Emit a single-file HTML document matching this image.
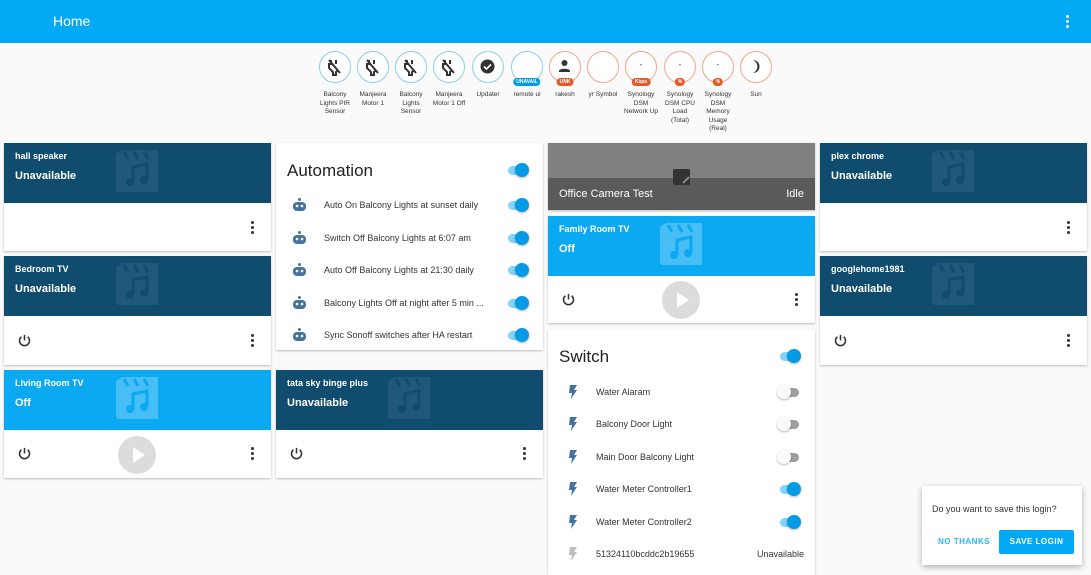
<!DOCTYPE html>
<html><head><meta charset="utf-8"><style>
*{box-sizing:border-box;margin:0;padding:0}
body{width:1091px;height:570px;overflow:hidden;background:#fafafa;font-family:"Liberation Sans",sans-serif;position:relative;color:#212121}
.top{position:absolute;left:0;top:0;width:1091px;height:43px;background:#03a9f4;color:#fff}
.top .t{position:absolute;left:53px;top:13px;font-size:14px}
.card{position:absolute;background:#fff;box-shadow:0 1px 2px rgba(0,0,0,.25);overflow:hidden}
.hd{position:absolute;left:0;top:0;width:100%;height:60px;background:#0f4c6e;color:#fff}
.hd.on{background:#0aa9f2}
.hd .n{position:absolute;left:11px;top:8px;font-size:9px;font-weight:bold}
.hd .s{position:absolute;left:11px;top:27px;font-size:11px;font-weight:bold}
.hd svg{position:absolute;left:112px;top:7px}
.dots{position:absolute;right:17px;width:3px}
.dots i{display:block;width:3px;height:3px;border-radius:50%;background:#333;margin-bottom:2px}
.pw{position:absolute;left:13px}
.play{position:absolute;left:114px;width:38px;height:38px;border-radius:50%;background:#dcdcdc}
.play:after{content:"";position:absolute;left:15px;top:11px;border-left:12px solid #fff;border-top:8px solid transparent;border-bottom:8px solid transparent}
.badge{position:absolute;top:51px;width:32px;height:32px;border-radius:50%;border:1.5px solid #87cdf3;background:#fff}
.badge.r{border-color:#f0a58d}
.bl{position:absolute;top:91px;width:34px;text-align:center;font-size:6.5px;line-height:8.5px;color:#333}
.tag{position:absolute;left:50%;transform:translateX(-50%);top:26px;background:#e55a2b;color:#fff;font-size:5px;border-radius:5px;padding:1px 3px;font-weight:bold;white-space:nowrap}
.tag.b{background:#039be5}
.dash{position:absolute;left:0;width:100%;text-align:center;top:8px;font-size:8px;color:#333}
.row{position:absolute;left:0;width:100%;height:32px;font-size:9px;color:#333}
.row .lb{position:absolute;left:48px;top:11px}
.tg{position:absolute;right:14px;width:24px;height:12px}
.tg .tr{position:absolute;left:3px;top:2px;width:19px;height:9px;border-radius:5px;background:#81d4fa}
.tg .th{position:absolute;right:0;top:-1px;width:14px;height:14px;border-radius:50%;background:#039be5;box-shadow:0 1px 2px rgba(0,0,0,.3)}
.tg.off .tr{background:#9e9e9e}
.tg.off .th{left:0;right:auto;background:#fafafa}
.h2{position:absolute;left:11px;font-size:17px;color:#212121}
</style></head><body>
<div class="top"><div class="t">Home</div>
<div style="position:absolute;left:1066px;top:15px"><div style="width:3px;height:3px;background:#fff;border-radius:50%;margin-bottom:2px"></div><div style="width:3px;height:3px;background:#fff;border-radius:50%;margin-bottom:2px"></div><div style="width:3px;height:3px;background:#fff;border-radius:50%"></div></div></div>

<div class="badge" style="left:319px"><svg width="29" height="29" viewBox="0 0 29 29"><path d="M11 8v4h-2v4l4 4v3h3v-3l1-1M16 8v4M9 8l11 13" stroke="#333" stroke-width="2" fill="none"/></svg></div>
<div class="badge" style="left:357px"><svg width="29" height="29" viewBox="0 0 29 29"><path d="M11 8v4h-2v4l4 4v3h3v-3l1-1M16 8v4M9 8l11 13" stroke="#333" stroke-width="2" fill="none"/></svg></div>
<div class="badge" style="left:395px"><svg width="29" height="29" viewBox="0 0 29 29"><path d="M11 8v4h-2v4l4 4v3h3v-3l1-1M16 8v4M9 8l11 13" stroke="#333" stroke-width="2" fill="none"/></svg></div>
<div class="badge" style="left:433px"><svg width="29" height="29" viewBox="0 0 29 29"><path d="M11 8v4h-2v4l4 4v3h3v-3l1-1M16 8v4M9 8l11 13" stroke="#333" stroke-width="2" fill="none"/></svg></div>
<div class="badge" style="left:472px"><svg width="29" height="29" viewBox="0 0 29 29"><circle cx="14.5" cy="14.5" r="7" fill="#333"/><path d="M11 14.5l2.5 2.5 4.5-4.5" stroke="#fff" stroke-width="1.6" fill="none"/></svg></div>
<div class="badge" style="left:511px"><span class="tag b">UNAVAIL</span></div>
<div class="badge r" style="left:549px"><svg width="29" height="29" viewBox="0 0 29 29"><circle cx="14.5" cy="11" r="3" fill="#333"/><path d="M9 19c0-3 11-3 11 0v1H9z" fill="#333"/></svg><span class="tag">UNK</span></div>
<div class="badge r" style="left:587px"></div>
<div class="badge r" style="left:625px"><div class="dash">-</div><span class="tag">Kbps</span></div>
<div class="badge r" style="left:664px"><div class="dash">-</div><span class="tag">%</span></div>
<div class="badge r" style="left:702px"><div class="dash">-</div><span class="tag">%</span></div>
<div class="badge r" style="left:740px"><svg width="29" height="29" viewBox="0 0 29 29"><path d="M12 8a7 7 0 0 1 0 13a6 6 0 0 0 0-13z" fill="#333"/></svg></div>

<div class="bl" style="left:318px">Balcony Lights PIR Sensor</div>
<div class="bl" style="left:356px">Manjeera Motor 1</div>
<div class="bl" style="left:394px">Balcony Lights Sensor</div>
<div class="bl" style="left:432px">Manjeera Motor 1 Off</div>
<div class="bl" style="left:471px">Updater</div>
<div class="bl" style="left:505px;width:44px">remote ui</div>
<div class="bl" style="left:548px">rakesh</div>
<div class="bl" style="left:582px;width:42px">yr Symbol</div>
<div class="bl" style="left:624px">Synology DSM Network Up</div>
<div class="bl" style="left:663px">Synology DSM CPU Load (Total)</div>
<div class="bl" style="left:701px">Synology DSM Memory Usage (Real)</div>
<div class="bl" style="left:739px">Sun</div>

<!-- column 1 -->
<div class="card" style="left:4px;top:143px;width:267px;height:108px"><div class="hd"><div class="n">hall speaker</div><div class="s">Unavailable</div><svg width="42" height="42" viewBox="0 0 42 42"><path d="M0 4l6-4h36v42H3a3 3 0 0 1-3-3z" fill="rgba(255,255,255,.07)"/><path d="M8 2l4 7M18 2l4 7M28 2l4 7" stroke="#0f4c6e" stroke-width="3"/><path d="M17 32V17l14-3v16" stroke="#0f4c6e" stroke-width="3" fill="none"/><circle cx="14" cy="32" r="4" fill="#0f4c6e"/><circle cx="28" cy="30" r="4" fill="#0f4c6e"/></svg></div><div class="dots" style="top:78px"><i></i><i></i><i></i></div></div>
<div class="card" style="left:4px;top:256px;width:267px;height:109px"><div class="hd"><div class="n">Bedroom TV</div><div class="s">Unavailable</div><svg width="42" height="42" viewBox="0 0 42 42"><path d="M0 4l6-4h36v42H3a3 3 0 0 1-3-3z" fill="rgba(255,255,255,.07)"/><path d="M8 2l4 7M18 2l4 7M28 2l4 7" stroke="#0f4c6e" stroke-width="3"/><path d="M17 32V17l14-3v16" stroke="#0f4c6e" stroke-width="3" fill="none"/><circle cx="14" cy="32" r="4" fill="#0f4c6e"/><circle cx="28" cy="30" r="4" fill="#0f4c6e"/></svg></div>
<svg class="pw" style="top:77px" width="15" height="15" viewBox="0 0 24 24"><path d="M12 3v9M7 6a8 8 0 1 0 10 0" stroke="#333" stroke-width="2.4" fill="none"/></svg><div class="dots" style="top:78px"><i></i><i></i><i></i></div></div>
<div class="card" style="left:4px;top:370px;width:267px;height:108px"><div class="hd on"><div class="n">Living Room TV</div><div class="s">Off</div><svg width="42" height="42" viewBox="0 0 42 42"><path d="M0 4l6-4h36v42H3a3 3 0 0 1-3-3z" fill="rgba(255,255,255,.25)"/><path d="M8 2l4 7M18 2l4 7M28 2l4 7" stroke="#0aa9f2" stroke-width="3"/><path d="M17 32V17l14-3v16" stroke="#0aa9f2" stroke-width="3" fill="none"/><circle cx="14" cy="32" r="4" fill="#0aa9f2"/><circle cx="28" cy="30" r="4" fill="#0aa9f2"/></svg></div>
<svg class="pw" style="top:76px" width="15" height="15" viewBox="0 0 24 24"><path d="M12 3v9M7 6a8 8 0 1 0 10 0" stroke="#333" stroke-width="2.4" fill="none"/></svg><div class="play" style="top:66px"></div><div class="dots" style="top:77px"><i></i><i></i><i></i></div></div>

<!-- column 2 -->
<div class="card" style="left:276px;top:143px;width:267px;height:207px">
<div class="h2" style="top:18px">Automation</div>
<div class="tg" style="top:21px"><div class="tr"></div><div class="th"></div></div>
<div class="row" style="top:46px"><svg style="position:absolute;left:16px;top:9px" width="15" height="14" viewBox="0 0 15 14"><circle cx="7.5" cy="1.5" r="1.5" fill="#44739e"/><rect x="1" y="4" width="13" height="9" rx="4" fill="#44739e"/><circle cx="5" cy="8" r="1.3" fill="#fff"/><circle cx="10" cy="8" r="1.3" fill="#fff"/></svg><span class="lb">Auto On Balcony Lights at sunset daily</span><div class="tg" style="top:10px"><div class="tr"></div><div class="th"></div></div></div>
<div class="row" style="top:79px"><svg style="position:absolute;left:16px;top:9px" width="15" height="14" viewBox="0 0 15 14"><circle cx="7.5" cy="1.5" r="1.5" fill="#44739e"/><rect x="1" y="4" width="13" height="9" rx="4" fill="#44739e"/><circle cx="5" cy="8" r="1.3" fill="#fff"/><circle cx="10" cy="8" r="1.3" fill="#fff"/></svg><span class="lb">Switch Off Balcony Lights at 6:07 am</span><div class="tg" style="top:10px"><div class="tr"></div><div class="th"></div></div></div>
<div class="row" style="top:111px"><svg style="position:absolute;left:16px;top:9px" width="15" height="14" viewBox="0 0 15 14"><circle cx="7.5" cy="1.5" r="1.5" fill="#44739e"/><rect x="1" y="4" width="13" height="9" rx="4" fill="#44739e"/><circle cx="5" cy="8" r="1.3" fill="#fff"/><circle cx="10" cy="8" r="1.3" fill="#fff"/></svg><span class="lb">Auto Off Balcony Lights at 21:30 daily</span><div class="tg" style="top:10px"><div class="tr"></div><div class="th"></div></div></div>
<div class="row" style="top:144px"><svg style="position:absolute;left:16px;top:9px" width="15" height="14" viewBox="0 0 15 14"><circle cx="7.5" cy="1.5" r="1.5" fill="#44739e"/><rect x="1" y="4" width="13" height="9" rx="4" fill="#44739e"/><circle cx="5" cy="8" r="1.3" fill="#fff"/><circle cx="10" cy="8" r="1.3" fill="#fff"/></svg><span class="lb">Balcony Lights Off at night after 5 min ...</span><div class="tg" style="top:10px"><div class="tr"></div><div class="th"></div></div></div>
<div class="row" style="top:176px"><svg style="position:absolute;left:16px;top:9px" width="15" height="14" viewBox="0 0 15 14"><circle cx="7.5" cy="1.5" r="1.5" fill="#44739e"/><rect x="1" y="4" width="13" height="9" rx="4" fill="#44739e"/><circle cx="5" cy="8" r="1.3" fill="#fff"/><circle cx="10" cy="8" r="1.3" fill="#fff"/></svg><span class="lb">Sync Sonoff switches after HA restart</span><div class="tg" style="top:10px"><div class="tr"></div><div class="th"></div></div></div>
</div>
<div class="card" style="left:276px;top:370px;width:267px;height:108px"><div class="hd"><div class="n">tata sky binge plus</div><div class="s">Unavailable</div><svg width="42" height="42" viewBox="0 0 42 42"><path d="M0 4l6-4h36v42H3a3 3 0 0 1-3-3z" fill="rgba(255,255,255,.07)"/><path d="M8 2l4 7M18 2l4 7M28 2l4 7" stroke="#0f4c6e" stroke-width="3"/><path d="M17 32V17l14-3v16" stroke="#0f4c6e" stroke-width="3" fill="none"/><circle cx="14" cy="32" r="4" fill="#0f4c6e"/><circle cx="28" cy="30" r="4" fill="#0f4c6e"/></svg></div>
<svg class="pw" style="top:76px" width="15" height="15" viewBox="0 0 24 24"><path d="M12 3v9M7 6a8 8 0 1 0 10 0" stroke="#333" stroke-width="2.4" fill="none"/></svg><div class="dots" style="top:77px"><i></i><i></i><i></i></div></div>

<!-- column 3 -->
<div class="card" style="left:548px;top:143px;width:267px;height:67px;background:#808080">
<div style="position:absolute;left:0;top:35px;width:100%;height:32px;background:#5a5a5a"></div>
<svg style="position:absolute;left:124px;top:25px" width="19" height="19" viewBox="0 0 19 19"><rect x="1" y="1" width="17" height="16" rx="2" fill="#333"/><path d="M11 15l6-6" stroke="#888" stroke-width="2"/></svg>
<div style="position:absolute;left:11px;top:45px;color:#fff;font-size:11px">Office Camera Test</div>
<div style="position:absolute;right:11px;top:45px;color:#fff;font-size:11px">Idle</div></div>
<div class="card" style="left:548px;top:216px;width:267px;height:107px"><div class="hd on"><div class="n">Family Room TV</div><div class="s">Off</div><svg width="42" height="42" viewBox="0 0 42 42"><path d="M0 4l6-4h36v42H3a3 3 0 0 1-3-3z" fill="rgba(255,255,255,.25)"/><path d="M8 2l4 7M18 2l4 7M28 2l4 7" stroke="#0aa9f2" stroke-width="3"/><path d="M17 32V17l14-3v16" stroke="#0aa9f2" stroke-width="3" fill="none"/><circle cx="14" cy="32" r="4" fill="#0aa9f2"/><circle cx="28" cy="30" r="4" fill="#0aa9f2"/></svg></div>
<svg class="pw" style="top:76px" width="15" height="15" viewBox="0 0 24 24"><path d="M12 3v9M7 6a8 8 0 1 0 10 0" stroke="#333" stroke-width="2.4" fill="none"/></svg><div class="play" style="top:65px"></div><div class="dots" style="top:77px"><i></i><i></i><i></i></div></div>
<div class="card" style="left:548px;top:330px;width:267px;height:245px">
<div class="h2" style="top:17px">Switch</div>
<div class="tg" style="top:20px"><div class="tr"></div><div class="th"></div></div>
<div class="row" style="top:46px"><svg style="position:absolute;left:20px;top:9px" width="10" height="14" viewBox="0 0 10 14"><path d="M2 0h7L6 5h3L3 14l1-6H1z" fill="#44739e"/></svg><span class="lb">Water Alaram</span><div class="tg off" style="top:10px"><div class="tr"></div><div class="th"></div></div></div>
<div class="row" style="top:78px"><svg style="position:absolute;left:20px;top:9px" width="10" height="14" viewBox="0 0 10 14"><path d="M2 0h7L6 5h3L3 14l1-6H1z" fill="#44739e"/></svg><span class="lb">Balcony Door Light</span><div class="tg off" style="top:10px"><div class="tr"></div><div class="th"></div></div></div>
<div class="row" style="top:111px"><svg style="position:absolute;left:20px;top:9px" width="10" height="14" viewBox="0 0 10 14"><path d="M2 0h7L6 5h3L3 14l1-6H1z" fill="#44739e"/></svg><span class="lb">Main Door Balcony Light</span><div class="tg off" style="top:10px"><div class="tr"></div><div class="th"></div></div></div>
<div class="row" style="top:143px"><svg style="position:absolute;left:20px;top:9px" width="10" height="14" viewBox="0 0 10 14"><path d="M2 0h7L6 5h3L3 14l1-6H1z" fill="#44739e"/></svg><span class="lb">Water Meter Controller1</span><div class="tg" style="top:10px"><div class="tr"></div><div class="th"></div></div></div>
<div class="row" style="top:176px"><svg style="position:absolute;left:20px;top:9px" width="10" height="14" viewBox="0 0 10 14"><path d="M2 0h7L6 5h3L3 14l1-6H1z" fill="#44739e"/></svg><span class="lb">Water Meter Controller2</span><div class="tg" style="top:10px"><div class="tr"></div><div class="th"></div></div></div>
<div class="row" style="top:208px"><svg style="position:absolute;left:20px;top:9px" width="10" height="14" viewBox="0 0 10 14"><path d="M2 0h7L6 5h3L3 14l1-6H1z" fill="#bdbdbd"/></svg><span class="lb">51324110bcddc2b19655</span><span style="position:absolute;right:11px;top:11px">Unavailable</span></div>
</div>

<!-- column 4 -->
<div class="card" style="left:820px;top:143px;width:267px;height:108px"><div class="hd"><div class="n">plex chrome</div><div class="s">Unavailable</div><svg width="42" height="42" viewBox="0 0 42 42"><path d="M0 4l6-4h36v42H3a3 3 0 0 1-3-3z" fill="rgba(255,255,255,.07)"/><path d="M8 2l4 7M18 2l4 7M28 2l4 7" stroke="#0f4c6e" stroke-width="3"/><path d="M17 32V17l14-3v16" stroke="#0f4c6e" stroke-width="3" fill="none"/><circle cx="14" cy="32" r="4" fill="#0f4c6e"/><circle cx="28" cy="30" r="4" fill="#0f4c6e"/></svg></div><div class="dots" style="top:78px"><i></i><i></i><i></i></div></div>
<div class="card" style="left:820px;top:256px;width:267px;height:109px"><div class="hd"><div class="n">googlehome1981</div><div class="s">Unavailable</div><svg width="42" height="42" viewBox="0 0 42 42"><path d="M0 4l6-4h36v42H3a3 3 0 0 1-3-3z" fill="rgba(255,255,255,.07)"/><path d="M8 2l4 7M18 2l4 7M28 2l4 7" stroke="#0f4c6e" stroke-width="3"/><path d="M17 32V17l14-3v16" stroke="#0f4c6e" stroke-width="3" fill="none"/><circle cx="14" cy="32" r="4" fill="#0f4c6e"/><circle cx="28" cy="30" r="4" fill="#0f4c6e"/></svg></div>
<svg class="pw" style="top:77px" width="15" height="15" viewBox="0 0 24 24"><path d="M12 3v9M7 6a8 8 0 1 0 10 0" stroke="#333" stroke-width="2.4" fill="none"/></svg><div class="dots" style="top:78px"><i></i><i></i><i></i></div></div>

<div class="card" style="left:922px;top:486px;width:160px;height:79px;box-shadow:0 2px 6px rgba(0,0,0,.3)">
<div style="position:absolute;left:10px;top:18px;font-size:9px;color:#333">Do you want to save this login?</div>
<div style="position:absolute;left:16px;top:51px;font-size:8px;font-weight:bold;color:#29b6f6;letter-spacing:.5px">NO THANKS</div>
<div style="position:absolute;left:77px;top:44px;width:75px;height:24px;background:#03a9f4;border-radius:2px;color:#fff;font-size:8px;font-weight:bold;text-align:center;line-height:24px;letter-spacing:.5px">SAVE LOGIN</div>
</div>
</body></html>
